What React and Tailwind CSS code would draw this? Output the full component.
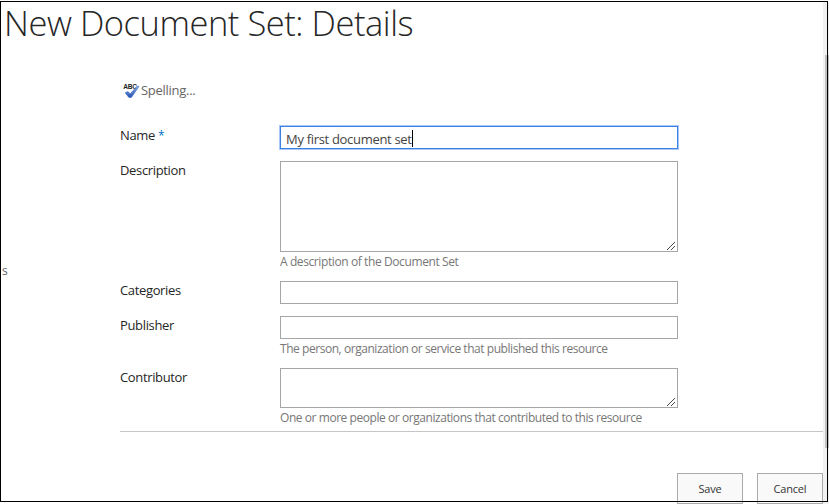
import React from "react";

function Grip() {
  return (
    <svg className="absolute right-[1px] bottom-[1px]" width="9" height="9" viewBox="0 0 9 9" shapeRendering="crispEdges">
      {[0, 1, 2, 3, 4, 5, 6, 7].map((i) => (
        <rect key={i} x={i} y={8 - i} width="1" height="1" fill="#4a4a4a" />
      ))}
      {[4, 5, 6, 7].map((i) => (
        <rect key={i} x={i} y={12 - i} width="1" height="1" fill="#4a4a4a" />
      ))}
    </svg>
  );
}

function SpellingIcon() {
  return (
    <svg width="17" height="16" viewBox="0 0 17 16">
      <defs>
        <linearGradient id="check" x1="0" y1="0" x2="0" y2="1">
          <stop offset="0" stopColor="#8fb0ea" />
          <stop offset="1" stopColor="#2450b0" />
        </linearGradient>
      </defs>
      <text transform="translate(0.2 7) scale(1.02 1)" fontFamily="Liberation Sans" fontWeight="bold" fontSize="6.5" fill="#222">ABC</text>
      <path d="M2.2 10.8 5 9.6 7.2 11.8 14 4.2 16 4.4 8.4 15.4H5.8Z" fill="url(#check)" stroke="#3a68c4" strokeWidth=".6" />
    </svg>
  );
}

function Row({ label, gap, children }) {
  return (
    <div className={"flex items-start " + gap}>
      <div className="w-[160px] shrink-0 text-[13px] leading-[18px] tracking-[-0.35px] text-[#262626]">{label}</div>
      <div className="w-[398px]">{children}</div>
    </div>
  );
}

const field = "relative border border-[#a6a6a6] bg-white";
const hint = "text-[12px] leading-[16px] pt-[2px] text-[#777] whitespace-nowrap";

export default function App() {
  return (
    <div className="relative flex h-[504px] w-[829px] overflow-hidden bg-white font-['Open_Sans','Noto_Sans',sans-serif]">
      <div className="w-[120px] shrink-0 overflow-visible">
        <h1 className="h-[82px] pl-[4px] text-[34.5px] leading-[45px] font-light tracking-[-0.46px] whitespace-nowrap text-[#262626]">
          <span>New Document Set: Details</span>
        </h1>
        <div className="mt-[180px] pl-[2px] text-[12px] leading-[18px] text-[#666]">
          <span>s</span>
        </div>
      </div>
      <main className="flex w-[703px] shrink-0 flex-col pt-[82px]">
        <div className="flex h-[16px] items-center pl-[3px] text-[13px] leading-[16px] tracking-[-0.28px] text-[#666]">
          <SpellingIcon />
          <span className="ml-[1px]">Spelling...</span>
        </div>
        <Row gap="mt-[28px] h-[35px]" label={<><span>Name</span> <span className="text-[12px] text-[#0072c6]">*</span></>}>
          <div className="flex h-[23px] items-center border border-[#3b82e0] pt-[2px] pl-[5px] text-[13px] leading-[18px] tracking-[-0.31px] text-[#444] ring-1 ring-[#a9c8fa]">
            <span className="whitespace-nowrap">My first document set</span>
            <span className="h-[17px] w-px bg-black" />
          </div>
        </Row>
        <Row gap="h-[120px]" label={<span>Description</span>}>
          <div className={field + " h-[91px]"}><Grip /></div>
          <div className={hint + " tracking-[-0.4px]"}><span>A description of the Document Set</span></div>
        </Row>
        <Row gap="h-[35px]" label={<span>Categories</span>}>
          <div className={field + " h-[23px]"} />
        </Row>
        <Row gap="h-[52px]" label={<span>Publisher</span>}>
          <div className={field + " h-[23px]"} />
          <div className={hint + " tracking-[-0.45px]"}><span>The person, organization or service that published this resource</span></div>
        </Row>
        <Row gap="h-[63px]" label={<span>Contributor</span>}>
          <div className={field + " h-[40px]"}><Grip /></div>
          <div className={hint + " tracking-[-0.44px]"}><span>One or more people or organizations that contributed to this resource</span></div>
        </Row>
        <div className="h-px bg-[#c6c6c6]" />
        <div className="mt-[41px] flex justify-end gap-[14px] text-[11px] tracking-[-0.2px] text-[#333]">
          <button className="h-[31px] w-[66px] border border-[#ababab] bg-[#f9f9f9] pt-[2px]"><span>Save</span></button>
          <button className="h-[31px] w-[66px] border border-[#ababab] bg-[#f9f9f9] pt-[2px]"><span>Cancel</span></button>
        </div>
      </main>
      <div className="mt-[2px] flex-1 bg-[#f1f1f1] pt-[53px] pl-[2px]">
        <div className="h-[393px] bg-[#c1c1c1]" />
      </div>
      <div className="pointer-events-none absolute top-px left-0 h-[501px] w-[828px] border border-black" />
    </div>
  );
}
